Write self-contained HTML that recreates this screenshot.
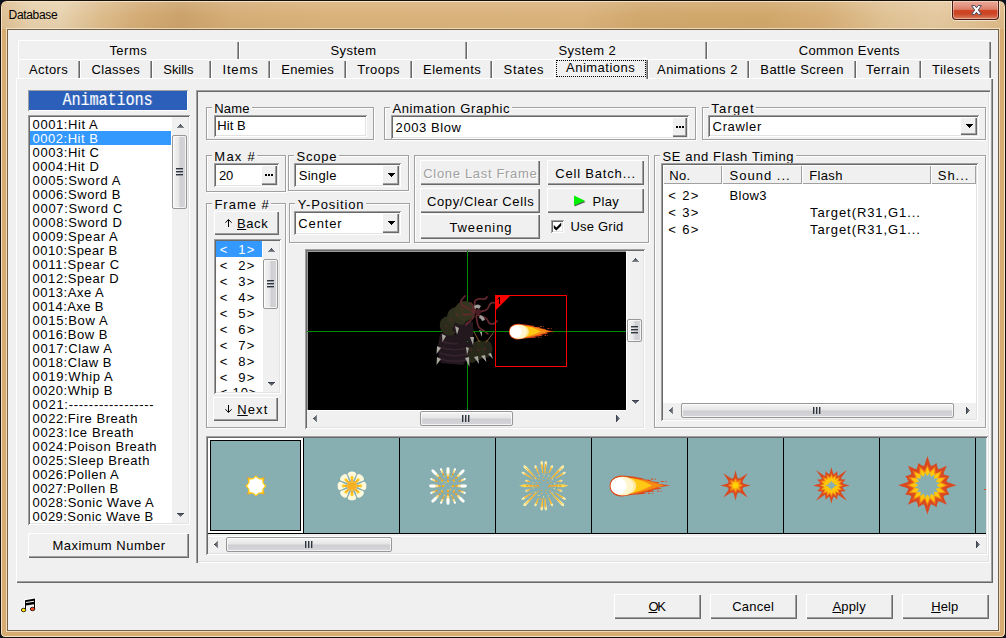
<!DOCTYPE html>
<html>
<head>
<meta charset="utf-8">
<title>Database</title>
<style>
html,body{margin:0;padding:0;}
body{width:1006px;height:638px;overflow:hidden;background:#D8B07A;font-family:"Liberation Sans",sans-serif;}
#w{position:relative;width:1006px;height:638px;overflow:hidden;}
#w div{position:absolute;box-sizing:border-box;}
.t{white-space:pre;line-height:normal;font-family:"Liberation Sans",sans-serif;}
.face{background:#F0F0F0;}
/* raised classic button */
.btn{background:#F0F0F0;box-shadow:inset 1px 1px 0 #FFFFFF,inset -1px -1px 0 #696969,inset -2px -2px 0 #A0A0A0;}
/* sunken client edge */
.sunk{background:#FFF;box-shadow:inset 1px 1px 0 #A0A0A0,inset -1px -1px 0 #FFFFFF,inset 2px 2px 0 #696969,inset -2px -2px 0 #E3E3E3;}
/* etched group box */
.grp{border:1px solid #A0A0A0;box-shadow:1px 1px 0 #FFFFFF,inset 1px 1px 0 #FFFFFF;}
.lbl{background:#F0F0F0;}
.sel{background:#3399FF;}
.sbtrack{background:#F0F0F0;}
.thumbv{border:1px solid #979797;border-radius:2px;background:linear-gradient(to right,#F4F4F4 0%,#E6E6E8 45%,#CFCFD3 55%,#D6D6DA 100%);box-shadow:inset 0 0 0 1px rgba(255,255,255,.7);}
.thumbh{border:1px solid #979797;border-radius:2px;background:linear-gradient(to bottom,#F4F4F4 0%,#E6E6E8 45%,#CFCFD3 55%,#D6D6DA 100%);box-shadow:inset 0 0 0 1px rgba(255,255,255,.7);}
.hdr{background:#F0F0F0;box-shadow:inset 1px 1px 0 #FFFFFF,inset -1px -1px 0 #A0A0A0;}
svg{position:absolute;overflow:visible;}
</style>
</head>
<body>
<div id="w">
<div style="left:0;top:0;width:1006px;height:638px;background:#0B1222;"></div>
<div style="left:0;top:0;width:1006px;height:638px;border:1px solid #15100A;border-radius:7px 7px 5px 5px;background:#D6AC72;box-shadow:inset 0 0 0 1px rgba(255,244,225,.75);"></div>
<div style="left:2px;top:2px;width:1002px;height:27px;border-radius:5px 5px 0 0;background:linear-gradient(97deg,#DDBE92 0%,#E6D0AC 3%,#E7D2AF 6%,#DDBC8C 10%,#D3AB75 14%,#CBA26B 18%,#D5AD77 23%,#D9B27B 32%,#D9B27C 58%,#D1A86D 64%,#D0A76B 76%,#D6AE76 82%,#E0C294 88%,#E4C9A0 93%,#E0C193 97%,#DCB987 100%);"></div>
<div style="left:2px;top:2px;width:1002px;height:27px;background:linear-gradient(to bottom,rgba(255,255,255,.12),rgba(255,255,255,0) 50%,rgba(120,80,30,.04));"></div>
<div style="left:7px;top:29px;width:992px;height:602px;border:1px solid #756146;background:#F0F0F0;box-shadow:0 0 0 1px rgba(255,242,222,.65);"></div>
<div class="t " style="left:8.60px;top:8.34px;font-size:12px;letter-spacing:-0.338px;color:#000;">Database</div>
<div style="left:950px;top:1px;width:51px;height:21px;overflow:hidden;"><div style="left:2px;top:0;width:47px;height:19px;border:1px solid #4A1B14;border-top:none;border-radius:0 0 4px 4px;box-shadow:0 0 0 1px rgba(255,255,255,.55),inset 0 0 0 1px rgba(255,255,255,.35);background:linear-gradient(to bottom,#ECA896 0%,#E49683 25%,#DB7C67 47%,#CF4524 50%,#CC4424 70%,#D46A47 90%,#DC8A6A 100%);"></div></div>
<svg style="left:971px;top:5px" width="11" height="10" viewBox="0 0 11 10"><path d="M0.6 0.6 L3.9 0.6 L5.5 2.8 L7.1 0.6 L10.4 0.6 L7.3 5 L10.4 9.4 L7.1 9.4 L5.5 7.2 L3.9 9.4 L0.6 9.4 L3.7 5 Z" fill="#FFFFFF" stroke="#4B4D60" stroke-width="1" stroke-linejoin="round"/></svg>
<div style="left:18px;top:40px;width:221px;height:19px;border-top:1px solid #FFF;border-left:1px solid #FFF;border-radius:2px 2px 0 0;background:#F0F0F0;"></div>
<div style="left:237px;top:42px;width:1px;height:17px;background:#A0A0A0;"></div>
<div style="left:238px;top:42px;width:1px;height:17px;background:#696969;"></div>
<div class="t " style="left:109.40px;top:43.03px;font-size:13px;letter-spacing:0.478px;color:#000;">Terms</div>
<div style="left:239px;top:40px;width:228px;height:19px;border-top:1px solid #FFF;border-left:1px solid #FFF;border-radius:2px 2px 0 0;background:#F0F0F0;"></div>
<div style="left:465px;top:42px;width:1px;height:17px;background:#A0A0A0;"></div>
<div style="left:466px;top:42px;width:1px;height:17px;background:#696969;"></div>
<div class="t " style="left:330.50px;top:43.03px;font-size:13px;letter-spacing:0.432px;color:#000;">System</div>
<div style="left:467px;top:40px;width:240px;height:19px;border-top:1px solid #FFF;border-left:1px solid #FFF;border-radius:2px 2px 0 0;background:#F0F0F0;"></div>
<div style="left:705px;top:42px;width:1px;height:17px;background:#A0A0A0;"></div>
<div style="left:706px;top:42px;width:1px;height:17px;background:#696969;"></div>
<div class="t " style="left:558.40px;top:43.03px;font-size:13px;letter-spacing:0.445px;color:#000;">System 2</div>
<div style="left:707px;top:40px;width:284px;height:19px;border-top:1px solid #FFF;border-left:1px solid #FFF;border-radius:2px 2px 0 0;background:#F0F0F0;"></div>
<div style="left:989px;top:42px;width:1px;height:17px;background:#A0A0A0;"></div>
<div style="left:990px;top:42px;width:1px;height:17px;background:#696969;"></div>
<div class="t " style="left:798.70px;top:43.03px;font-size:13px;letter-spacing:0.401px;color:#000;">Common Events</div>
<div style="left:18px;top:59px;width:62px;height:19px;border-top:1px solid #FFF;border-left:1px solid #FFF;border-radius:2px 2px 0 0;background:#F0F0F0;"></div>
<div style="left:78px;top:61px;width:1px;height:17px;background:#A0A0A0;"></div>
<div style="left:79px;top:61px;width:1px;height:17px;background:#696969;"></div>
<div class="t " style="left:29.10px;top:62.03px;font-size:13px;letter-spacing:0.352px;color:#000;">Actors</div>
<div style="left:80px;top:59px;width:72px;height:19px;border-top:1px solid #FFF;border-left:1px solid #FFF;border-radius:2px 2px 0 0;background:#F0F0F0;"></div>
<div style="left:150px;top:61px;width:1px;height:17px;background:#A0A0A0;"></div>
<div style="left:151px;top:61px;width:1px;height:17px;background:#696969;"></div>
<div class="t " style="left:91.50px;top:62.03px;font-size:13px;letter-spacing:0.327px;color:#000;">Classes</div>
<div style="left:152px;top:59px;width:59px;height:19px;border-top:1px solid #FFF;border-left:1px solid #FFF;border-radius:2px 2px 0 0;background:#F0F0F0;"></div>
<div style="left:209px;top:61px;width:1px;height:17px;background:#A0A0A0;"></div>
<div style="left:210px;top:61px;width:1px;height:17px;background:#696969;"></div>
<div class="t " style="left:163.30px;top:62.03px;font-size:13px;letter-spacing:-0.047px;color:#000;">Skills</div>
<div style="left:211px;top:59px;width:59px;height:19px;border-top:1px solid #FFF;border-left:1px solid #FFF;border-radius:2px 2px 0 0;background:#F0F0F0;"></div>
<div style="left:268px;top:61px;width:1px;height:17px;background:#A0A0A0;"></div>
<div style="left:269px;top:61px;width:1px;height:17px;background:#696969;"></div>
<div class="t " style="left:222.40px;top:62.03px;font-size:13px;letter-spacing:0.879px;color:#000;">Items</div>
<div style="left:270px;top:59px;width:76px;height:19px;border-top:1px solid #FFF;border-left:1px solid #FFF;border-radius:2px 2px 0 0;background:#F0F0F0;"></div>
<div style="left:344px;top:61px;width:1px;height:17px;background:#A0A0A0;"></div>
<div style="left:345px;top:61px;width:1px;height:17px;background:#696969;"></div>
<div class="t " style="left:281.30px;top:62.03px;font-size:13px;letter-spacing:0.304px;color:#000;">Enemies</div>
<div style="left:346px;top:59px;width:66px;height:19px;border-top:1px solid #FFF;border-left:1px solid #FFF;border-radius:2px 2px 0 0;background:#F0F0F0;"></div>
<div style="left:410px;top:61px;width:1px;height:17px;background:#A0A0A0;"></div>
<div style="left:411px;top:61px;width:1px;height:17px;background:#696969;"></div>
<div class="t " style="left:357.30px;top:62.03px;font-size:13px;letter-spacing:0.464px;color:#000;">Troops</div>
<div style="left:412px;top:59px;width:80px;height:19px;border-top:1px solid #FFF;border-left:1px solid #FFF;border-radius:2px 2px 0 0;background:#F0F0F0;"></div>
<div style="left:490px;top:61px;width:1px;height:17px;background:#A0A0A0;"></div>
<div style="left:491px;top:61px;width:1px;height:17px;background:#696969;"></div>
<div class="t " style="left:423.00px;top:62.03px;font-size:13px;letter-spacing:0.516px;color:#000;">Elements</div>
<div style="left:492px;top:59px;width:62px;height:19px;border-top:1px solid #FFF;border-left:1px solid #FFF;border-radius:2px 2px 0 0;background:#F0F0F0;"></div>
<div class="t " style="left:503.60px;top:62.03px;font-size:13px;letter-spacing:0.629px;color:#000;">States</div>
<div style="left:648px;top:59px;width:101px;height:19px;border-top:1px solid #FFF;border-left:1px solid #FFF;border-radius:2px 2px 0 0;background:#F0F0F0;"></div>
<div style="left:747px;top:61px;width:1px;height:17px;background:#A0A0A0;"></div>
<div style="left:748px;top:61px;width:1px;height:17px;background:#696969;"></div>
<div class="t " style="left:657.00px;top:62.03px;font-size:13px;letter-spacing:0.477px;color:#000;">Animations 2</div>
<div style="left:749px;top:59px;width:107px;height:19px;border-top:1px solid #FFF;border-left:1px solid #FFF;border-radius:2px 2px 0 0;background:#F0F0F0;"></div>
<div style="left:854px;top:61px;width:1px;height:17px;background:#A0A0A0;"></div>
<div style="left:855px;top:61px;width:1px;height:17px;background:#696969;"></div>
<div class="t " style="left:760.30px;top:62.03px;font-size:13px;letter-spacing:0.430px;color:#000;">Battle Screen</div>
<div style="left:856px;top:59px;width:65px;height:19px;border-top:1px solid #FFF;border-left:1px solid #FFF;border-radius:2px 2px 0 0;background:#F0F0F0;"></div>
<div style="left:919px;top:61px;width:1px;height:17px;background:#A0A0A0;"></div>
<div style="left:920px;top:61px;width:1px;height:17px;background:#696969;"></div>
<div class="t " style="left:866.00px;top:62.03px;font-size:13px;letter-spacing:0.644px;color:#000;">Terrain</div>
<div style="left:921px;top:59px;width:70px;height:19px;border-top:1px solid #FFF;border-left:1px solid #FFF;border-radius:2px 2px 0 0;background:#F0F0F0;"></div>
<div style="left:989px;top:61px;width:1px;height:17px;background:#A0A0A0;"></div>
<div style="left:990px;top:61px;width:1px;height:17px;background:#696969;"></div>
<div class="t " style="left:932.00px;top:62.03px;font-size:13px;letter-spacing:0.485px;color:#000;">Tilesets</div>
<div style="left:16px;top:78px;width:977px;height:505px;background:#F0F0F0;box-shadow:inset 1px 1px 0 #FFF,inset -1px -1px 0 #696969,inset -2px -2px 0 #A0A0A0;"></div>
<div style="left:554px;top:58px;width:94px;height:21px;border-top:1px solid #FFF;border-left:1px solid #FFF;border-radius:2px 2px 0 0;background:#F0F0F0;"></div>
<div style="left:646px;top:60px;width:1px;height:19px;background:#A0A0A0;"></div>
<div style="left:647px;top:60px;width:1px;height:19px;background:#696969;"></div>
<div style="left:556px;top:60px;width:90px;height:17px;border:1px dotted #000;"></div>
<div class="t " style="left:566.00px;top:59.73px;font-size:13px;letter-spacing:0.499px;color:#000;">Animations</div>
<div style="left:28px;top:90px;width:160px;height:21px;background:#2B5FBA;box-shadow:inset 1px 1px 0 #A0A0A0,inset -1px -1px 0 #FFF;"></div>
<div class="t" style="left:62.5px;top:89.8px;font-family:'Liberation Mono',monospace;font-size:15px;letter-spacing:0px;color:#FFF;transform:scaleY(1.265);transform-origin:0 0;text-shadow:1px 0 0 rgba(255,255,255,.25);">Animations</div>
<div class="sunk" style="left:28px;top:115px;width:162px;height:410px;"></div>
<div class="sel" style="left:30px;top:131px;width:141px;height:14px;"></div>
<div class="t " style="left:32.60px;top:117.04px;font-size:13px;letter-spacing:0.579px;color:#000;">0001:Hit A</div>
<div class="t " style="left:32.60px;top:131.04px;font-size:13px;letter-spacing:0.500px;color:#FFF;">0002:Hit B</div>
<div class="t " style="left:32.60px;top:145.04px;font-size:13px;letter-spacing:0.553px;color:#000;">0003:Hit C</div>
<div class="t " style="left:32.60px;top:159.04px;font-size:13px;letter-spacing:0.531px;color:#000;">0004:Hit D</div>
<div class="t " style="left:32.60px;top:173.04px;font-size:13px;letter-spacing:0.632px;color:#000;">0005:Sword A</div>
<div class="t " style="left:32.60px;top:187.04px;font-size:13px;letter-spacing:0.567px;color:#000;">0006:Sword B</div>
<div class="t " style="left:32.60px;top:201.04px;font-size:13px;letter-spacing:0.665px;color:#000;">0007:Sword C</div>
<div class="t " style="left:32.60px;top:215.04px;font-size:13px;letter-spacing:0.620px;color:#000;">0008:Sword D</div>
<div class="t " style="left:32.60px;top:229.04px;font-size:13px;letter-spacing:0.583px;color:#000;">0009:Spear A</div>
<div class="t " style="left:32.60px;top:243.04px;font-size:13px;letter-spacing:0.472px;color:#000;">0010:Spear B</div>
<div class="t " style="left:32.60px;top:257.04px;font-size:13px;letter-spacing:0.658px;color:#000;">0011:Spear C</div>
<div class="t " style="left:32.60px;top:271.04px;font-size:13px;letter-spacing:0.534px;color:#000;">0012:Spear D</div>
<div class="t " style="left:32.60px;top:285.04px;font-size:13px;letter-spacing:0.522px;color:#000;">0013:Axe A</div>
<div class="t " style="left:32.60px;top:299.04px;font-size:13px;letter-spacing:0.409px;color:#000;">0014:Axe B</div>
<div class="t " style="left:32.60px;top:313.04px;font-size:13px;letter-spacing:0.635px;color:#000;">0015:Bow A</div>
<div class="t " style="left:32.60px;top:327.04px;font-size:13px;letter-spacing:0.522px;color:#000;">0016:Bow B</div>
<div class="t " style="left:32.60px;top:341.04px;font-size:13px;letter-spacing:0.631px;color:#000;">0017:Claw A</div>
<div class="t " style="left:32.60px;top:355.04px;font-size:13px;letter-spacing:0.519px;color:#000;">0018:Claw B</div>
<div class="t " style="left:32.60px;top:369.04px;font-size:13px;letter-spacing:0.648px;color:#000;">0019:Whip A</div>
<div class="t " style="left:32.60px;top:383.04px;font-size:13px;letter-spacing:0.527px;color:#000;">0020:Whip B</div>
<div class="t " style="left:32.60px;top:397.04px;font-size:13px;letter-spacing:0.713px;color:#000;">0021:-----------------</div>
<div class="t " style="left:32.60px;top:411.04px;font-size:13px;letter-spacing:0.538px;color:#000;">0022:Fire Breath</div>
<div class="t " style="left:32.60px;top:425.04px;font-size:13px;letter-spacing:0.651px;color:#000;">0023:Ice Breath</div>
<div class="t " style="left:32.60px;top:439.04px;font-size:13px;letter-spacing:0.577px;color:#000;">0024:Poison Breath</div>
<div class="t " style="left:32.60px;top:453.04px;font-size:13px;letter-spacing:0.569px;color:#000;">0025:Sleep Breath</div>
<div class="t " style="left:32.60px;top:467.04px;font-size:13px;letter-spacing:0.489px;color:#000;">0026:Pollen A</div>
<div class="t " style="left:32.60px;top:481.04px;font-size:13px;letter-spacing:0.387px;color:#000;">0027:Pollen B</div>
<div class="t " style="left:32.60px;top:495.04px;font-size:13px;letter-spacing:0.508px;color:#000;">0028:Sonic Wave A</div>
<div class="t " style="left:32.60px;top:509.03px;font-size:13px;letter-spacing:0.438px;color:#000;">0029:Sonic Wave B</div>
<div style="left:171px;top:117px;width:1px;height:406px;background:#FFF;"></div>
<div class="sbtrack" style="left:172px;top:117px;width:16px;height:406px;"></div>
<div style="left:180px;top:124px;width:1px;height:1px;background:#3F4550;opacity:1.00;"></div>
<div style="left:179px;top:125px;width:3px;height:1px;background:#3F4550;opacity:0.88;"></div>
<div style="left:178px;top:126px;width:5px;height:1px;background:#3F4550;opacity:0.76;"></div>
<div style="left:177px;top:127px;width:7px;height:1px;background:#3F4550;opacity:0.64;"></div>
<div style="left:177px;top:513px;width:7px;height:1px;background:#3F4550;opacity:1.00;"></div>
<div style="left:178px;top:514px;width:5px;height:1px;background:#3F4550;opacity:0.88;"></div>
<div style="left:179px;top:515px;width:3px;height:1px;background:#3F4550;opacity:0.76;"></div>
<div style="left:180px;top:516px;width:1px;height:1px;background:#3F4550;opacity:0.64;"></div>
<div class="thumbv" style="left:172px;top:135px;width:15px;height:74px;"></div>
<div style="left:176px;top:168px;width:7px;height:1px;background:#30353C;"></div>
<div style="left:176px;top:169px;width:7px;height:1px;background:#969BA3;"></div>
<div style="left:176px;top:171px;width:7px;height:1px;background:#30353C;"></div>
<div style="left:176px;top:172px;width:7px;height:1px;background:#969BA3;"></div>
<div style="left:176px;top:174px;width:7px;height:1px;background:#30353C;"></div>
<div style="left:176px;top:175px;width:7px;height:1px;background:#969BA3;"></div>
<div class="btn" style="left:28px;top:533px;width:161px;height:25px;"></div>
<div class="t " style="left:52.40px;top:537.53px;font-size:13px;letter-spacing:0.494px;color:#000;">Maximum Number</div>
<div style="left:196px;top:90px;width:794px;height:473px;background:#F0F0F0;box-shadow:inset 1px 1px 0 #A0A0A0,inset 2px 2px 0 #696969,inset -1px -1px 0 #FFF,inset -2px -2px 0 #E3E3E3;"></div>
<div class="grp" style="left:206px;top:107px;width:168px;height:33px;"></div>
<div class="lbl" style="left:212px;top:105px;width:40px;height:5px;"></div>
<div class="t " style="left:214.30px;top:100.83px;font-size:13px;letter-spacing:0.141px;color:#000;">Name</div>
<div class="sunk" style="left:214px;top:115px;width:153px;height:22px;"></div>
<div class="t " style="left:217.20px;top:117.83px;font-size:13px;letter-spacing:0.082px;color:#000;">Hit B</div>
<div class="grp" style="left:384px;top:107px;width:312px;height:33px;"></div>
<div class="lbl" style="left:390px;top:105px;width:122px;height:5px;"></div>
<div class="t " style="left:392.40px;top:100.83px;font-size:13px;letter-spacing:0.641px;color:#000;">Animation Graphic</div>
<div class="sunk" style="left:391px;top:115px;width:298px;height:24px;"></div>
<div class="t " style="left:395.60px;top:119.73px;font-size:13px;letter-spacing:0.586px;color:#000;">2003 Blow</div>
<div class="btn" style="left:672px;top:117px;width:15px;height:20px;"></div>
<div style="left:676px;top:126px;width:2px;height:2px;background:#000;"></div>
<div style="left:679px;top:126px;width:2px;height:2px;background:#000;"></div>
<div style="left:682px;top:126px;width:2px;height:2px;background:#000;"></div>
<div class="grp" style="left:702px;top:107px;width:284px;height:33px;"></div>
<div class="lbl" style="left:709px;top:105px;width:47px;height:5px;"></div>
<div class="t " style="left:711.20px;top:100.83px;font-size:13px;letter-spacing:1.254px;color:#000;">Target</div>
<div class="sunk" style="left:708px;top:115px;width:271px;height:22px;"></div>
<div class="t " style="left:712.60px;top:119.23px;font-size:13px;letter-spacing:0.653px;color:#000;">Crawler</div>
<div class="btn" style="left:960px;top:117px;width:17px;height:18px;"></div>
<div style="left:966px;top:124px;width:7px;height:1px;background:#000;"></div>
<div style="left:967px;top:125px;width:5px;height:1px;background:#000;"></div>
<div style="left:968px;top:126px;width:3px;height:1px;background:#000;"></div>
<div style="left:969px;top:127px;width:1px;height:1px;background:#000;"></div>
<div class="grp" style="left:206px;top:155px;width:80px;height:37px;"></div>
<div class="lbl" style="left:212px;top:153px;width:45px;height:5px;"></div>
<div class="t " style="left:214.30px;top:148.94px;font-size:13px;letter-spacing:1.250px;color:#000;">Max #</div>
<div class="sunk" style="left:214px;top:163px;width:65px;height:24px;"></div>
<div class="t " style="left:218.90px;top:168.04px;font-size:13px;letter-spacing:-0.060px;color:#000;">20</div>
<div class="btn" style="left:261px;top:165px;width:16px;height:20px;"></div>
<div style="left:265px;top:174px;width:2px;height:2px;background:#000;"></div>
<div style="left:268px;top:174px;width:2px;height:2px;background:#000;"></div>
<div style="left:271px;top:174px;width:2px;height:2px;background:#000;"></div>
<div class="grp" style="left:288px;top:155px;width:121px;height:36px;"></div>
<div class="lbl" style="left:294px;top:153px;width:45px;height:5px;"></div>
<div class="t " style="left:296.60px;top:148.94px;font-size:13px;letter-spacing:0.735px;color:#000;">Scope</div>
<div class="sunk" style="left:294px;top:163px;width:107px;height:24px;"></div>
<div class="t " style="left:298.70px;top:168.04px;font-size:13px;letter-spacing:0.313px;color:#000;">Single</div>
<div class="btn" style="left:382px;top:165px;width:17px;height:20px;"></div>
<div style="left:388px;top:173px;width:7px;height:1px;background:#000;"></div>
<div style="left:389px;top:174px;width:5px;height:1px;background:#000;"></div>
<div style="left:390px;top:175px;width:3px;height:1px;background:#000;"></div>
<div style="left:391px;top:176px;width:1px;height:1px;background:#000;"></div>
<div class="grp" style="left:206px;top:203px;width:80px;height:225px;"></div>
<div class="lbl" style="left:212px;top:201px;width:59px;height:5px;"></div>
<div class="t " style="left:214.40px;top:196.54px;font-size:13px;letter-spacing:1.000px;color:#000;">Frame #</div>
<div class="btn" style="left:214px;top:211px;width:65px;height:24px;"></div>
<div class="grp" style="left:289px;top:203px;width:121px;height:40px;"></div>
<div class="lbl" style="left:295px;top:201px;width:71px;height:5px;"></div>
<div class="t " style="left:297.70px;top:196.63px;font-size:13px;letter-spacing:0.860px;color:#000;">Y-Position</div>
<div class="sunk" style="left:294px;top:211px;width:107px;height:24px;"></div>
<div class="t " style="left:298.30px;top:215.94px;font-size:13px;letter-spacing:0.876px;color:#000;">Center</div>
<div class="btn" style="left:382px;top:213px;width:17px;height:20px;"></div>
<div style="left:388px;top:221px;width:7px;height:1px;background:#000;"></div>
<div style="left:389px;top:222px;width:5px;height:1px;background:#000;"></div>
<div style="left:390px;top:223px;width:3px;height:1px;background:#000;"></div>
<div style="left:391px;top:224px;width:1px;height:1px;background:#000;"></div>
<svg style="left:225px;top:219px" width="7" height="8" viewBox="0 0 7 8"><path d="M3.5 0.6 V8 M0.4 3.7 L3.5 0.6 L6.6 3.7" fill="none" stroke="#000" stroke-width="1"/></svg>
<div class="t " style="left:237.00px;top:216.44px;font-size:13px;letter-spacing:0.600px;color:#000;"><u>B</u>ack</div>
<div class="sunk" style="left:214px;top:239px;width:67px;height:155px;"></div>
<div class="sel" style="left:216px;top:241px;width:46px;height:16px;"></div>
<div class="t " style="left:219.80px;top:241.74px;font-size:13px;letter-spacing:1.241px;color:#FFF;">&lt;  1&gt;</div>
<div class="t " style="left:219.80px;top:257.74px;font-size:13px;letter-spacing:1.241px;color:#000;">&lt;  2&gt;</div>
<div class="t " style="left:219.80px;top:273.74px;font-size:13px;letter-spacing:1.241px;color:#000;">&lt;  3&gt;</div>
<div class="t " style="left:219.80px;top:289.74px;font-size:13px;letter-spacing:1.241px;color:#000;">&lt;  4&gt;</div>
<div class="t " style="left:219.80px;top:305.74px;font-size:13px;letter-spacing:1.241px;color:#000;">&lt;  5&gt;</div>
<div class="t " style="left:219.80px;top:321.74px;font-size:13px;letter-spacing:1.241px;color:#000;">&lt;  6&gt;</div>
<div class="t " style="left:219.80px;top:337.74px;font-size:13px;letter-spacing:1.241px;color:#000;">&lt;  7&gt;</div>
<div class="t " style="left:219.80px;top:353.74px;font-size:13px;letter-spacing:1.241px;color:#000;">&lt;  8&gt;</div>
<div class="t " style="left:219.80px;top:369.74px;font-size:13px;letter-spacing:1.241px;color:#000;">&lt;  9&gt;</div>
<div style="left:216px;top:385px;width:46px;height:7px;overflow:hidden;"><div class="t" style="position:absolute;left:3.8px;top:0.2px;font-size:13px;letter-spacing:.8px;">&lt; 10&gt;</div></div>
<div style="left:262px;top:241px;width:1px;height:151px;background:#FFF;"></div>
<div class="sbtrack" style="left:263px;top:241px;width:16px;height:151px;"></div>
<div style="left:271px;top:248px;width:1px;height:1px;background:#3F4550;opacity:1.00;"></div>
<div style="left:270px;top:249px;width:3px;height:1px;background:#3F4550;opacity:0.88;"></div>
<div style="left:269px;top:250px;width:5px;height:1px;background:#3F4550;opacity:0.76;"></div>
<div style="left:268px;top:251px;width:7px;height:1px;background:#3F4550;opacity:0.64;"></div>
<div style="left:268px;top:382px;width:7px;height:1px;background:#3F4550;opacity:1.00;"></div>
<div style="left:269px;top:383px;width:5px;height:1px;background:#3F4550;opacity:0.88;"></div>
<div style="left:270px;top:384px;width:3px;height:1px;background:#3F4550;opacity:0.76;"></div>
<div style="left:271px;top:385px;width:1px;height:1px;background:#3F4550;opacity:0.64;"></div>
<div class="thumbv" style="left:263px;top:259px;width:15px;height:50px;"></div>
<div style="left:267px;top:280px;width:7px;height:1px;background:#30353C;"></div>
<div style="left:267px;top:281px;width:7px;height:1px;background:#969BA3;"></div>
<div style="left:267px;top:283px;width:7px;height:1px;background:#30353C;"></div>
<div style="left:267px;top:284px;width:7px;height:1px;background:#969BA3;"></div>
<div style="left:267px;top:286px;width:7px;height:1px;background:#30353C;"></div>
<div style="left:267px;top:287px;width:7px;height:1px;background:#969BA3;"></div>
<div class="btn" style="left:213px;top:397px;width:65px;height:24px;"></div>
<svg style="left:225px;top:405px" width="7" height="8" viewBox="0 0 7 8"><path d="M3.5 0 V7.4 M0.4 4.3 L3.5 7.4 L6.6 4.3" fill="none" stroke="#000" stroke-width="1"/></svg>
<div class="t " style="left:237.30px;top:402.04px;font-size:13px;letter-spacing:1.090px;color:#000;"><u>N</u>ext</div>
<div class="grp" style="left:414px;top:155px;width:235px;height:88px;"></div>
<div class="btn" style="left:420px;top:160px;width:120px;height:25px;"></div>
<div class="t " style="left:423.30px;top:166.04px;font-size:13px;letter-spacing:0.672px;color:#A0A0A0;text-shadow:1px 1px 0 #FFF;">Clone Last Frame</div>
<div class="btn" style="left:547px;top:160px;width:97px;height:25px;"></div>
<div class="t " style="left:555.30px;top:165.94px;font-size:13px;letter-spacing:0.810px;color:#000;">Cell Batch...</div>
<div class="btn" style="left:420px;top:188px;width:120px;height:25px;"></div>
<div class="t " style="left:427.00px;top:193.63px;font-size:13px;letter-spacing:0.611px;color:#000;">Copy/Clear Cells</div>
<div class="btn" style="left:547px;top:188px;width:97px;height:25px;"></div>
<div class="t " style="left:592.50px;top:193.83px;font-size:13px;letter-spacing:0.304px;color:#000;">Play</div>
<svg style="left:573px;top:195px" width="14" height="12" viewBox="0 0 14 12"><path d="M1.6 1.8 L12.6 7 L1.6 11.6 Z" fill="#5A5A5A"/><path d="M1 0.6 L12 5.8 L1 10.6 Z" fill="#00F000"/></svg>
<div class="btn" style="left:420px;top:214px;width:120px;height:25px;"></div>
<div class="t " style="left:449.40px;top:219.94px;font-size:13px;letter-spacing:0.936px;color:#000;">Tweening</div>
<div class="sunk" style="left:551px;top:220px;width:13px;height:13px;"></div>
<svg style="left:553px;top:222px" width="9" height="9" viewBox="0 0 9 9"><path d="M0.8 3 L3.4 5.4 L8.2 0.6 L8.2 3.8 L3.4 8.6 L0.8 6.2 Z" fill="#000"/></svg>
<div class="t " style="left:570.50px;top:219.44px;font-size:13px;letter-spacing:0.202px;color:#000;">Use Grid</div>
<div class="grp" style="left:654px;top:155px;width:332px;height:273px;"></div>
<div class="lbl" style="left:660px;top:153px;width:136px;height:5px;"></div>
<div class="t " style="left:662.60px;top:148.94px;font-size:13px;letter-spacing:0.609px;color:#000;">SE and Flash Timing</div>
<div class="sunk" style="left:661px;top:163px;width:317px;height:258px;"></div>
<div class="hdr" style="left:663px;top:165px;width:59px;height:19px;"></div>
<div class="hdr" style="left:722px;top:165px;width:80px;height:19px;"></div>
<div class="hdr" style="left:802px;top:165px;width:129px;height:19px;"></div>
<div class="hdr" style="left:931px;top:165px;width:45px;height:19px;"></div>
<div class="t " style="left:669.30px;top:167.74px;font-size:13px;letter-spacing:0.235px;color:#000;">No.</div>
<div class="t " style="left:729.50px;top:167.74px;font-size:13px;letter-spacing:1.020px;color:#000;">Sound ...</div>
<div class="t " style="left:809.30px;top:167.74px;font-size:13px;letter-spacing:0.328px;color:#000;">Flash</div>
<div class="t " style="left:937.80px;top:167.74px;font-size:13px;letter-spacing:0.941px;color:#000;">Sh...</div>
<div class="t " style="left:668.30px;top:188.13px;font-size:13px;letter-spacing:1.358px;color:#000;">&lt; 2&gt;</div>
<div class="t " style="left:729.50px;top:188.13px;font-size:13px;letter-spacing:0.423px;color:#000;">Blow3</div>
<div class="t " style="left:668.30px;top:205.24px;font-size:13px;letter-spacing:1.358px;color:#000;">&lt; 3&gt;</div>
<div class="t " style="left:810.00px;top:205.24px;font-size:13px;letter-spacing:0.920px;color:#000;">Target(R31,G1...</div>
<div class="t " style="left:668.30px;top:221.94px;font-size:13px;letter-spacing:1.358px;color:#000;">&lt; 6&gt;</div>
<div class="t " style="left:810.00px;top:221.94px;font-size:13px;letter-spacing:0.920px;color:#000;">Target(R31,G1...</div>
<div style="left:663px;top:402px;width:313px;height:1px;background:#FFF;"></div>
<div class="sbtrack" style="left:663px;top:403px;width:313px;height:16px;"></div>
<div style="left:669px;top:410px;width:1px;height:1px;background:#3F4550;opacity:1.00;"></div>
<div style="left:670px;top:409px;width:1px;height:3px;background:#3F4550;opacity:0.88;"></div>
<div style="left:671px;top:408px;width:1px;height:5px;background:#3F4550;opacity:0.76;"></div>
<div style="left:672px;top:407px;width:1px;height:7px;background:#3F4550;opacity:0.64;"></div>
<div style="left:966px;top:407px;width:1px;height:7px;background:#3F4550;opacity:1.00;"></div>
<div style="left:967px;top:408px;width:1px;height:5px;background:#3F4550;opacity:0.88;"></div>
<div style="left:968px;top:409px;width:1px;height:3px;background:#3F4550;opacity:0.76;"></div>
<div style="left:969px;top:410px;width:1px;height:1px;background:#3F4550;opacity:0.64;"></div>
<div class="thumbh" style="left:681px;top:403px;width:273px;height:15px;"></div>
<div style="left:813px;top:407px;width:1px;height:7px;background:#30353C;"></div>
<div style="left:814px;top:407px;width:1px;height:7px;background:#969BA3;"></div>
<div style="left:816px;top:407px;width:1px;height:7px;background:#30353C;"></div>
<div style="left:817px;top:407px;width:1px;height:7px;background:#969BA3;"></div>
<div style="left:819px;top:407px;width:1px;height:7px;background:#30353C;"></div>
<div style="left:820px;top:407px;width:1px;height:7px;background:#969BA3;"></div>
<div class="sunk" style="left:305px;top:249px;width:340px;height:180px;background:#F0F0F0;"></div>
<div class="" style="left:307px;top:251px;width:319px;height:159px;background:#000;overflow:hidden;"><!--VIEW--></div>
<div style="left:307px;top:251px;width:319px;height:1px;background:#9A9A9A;"></div>
<div style="left:307px;top:251px;width:1px;height:159px;background:#9A9A9A;"></div>
<div style="left:626px;top:251px;width:1px;height:159px;background:#FFF;"></div>
<div class="sbtrack" style="left:627px;top:251px;width:16px;height:159px;"></div>
<div style="left:635px;top:258px;width:1px;height:1px;background:#3F4550;opacity:1.00;"></div>
<div style="left:634px;top:259px;width:3px;height:1px;background:#3F4550;opacity:0.88;"></div>
<div style="left:633px;top:260px;width:5px;height:1px;background:#3F4550;opacity:0.76;"></div>
<div style="left:632px;top:261px;width:7px;height:1px;background:#3F4550;opacity:0.64;"></div>
<div style="left:632px;top:400px;width:7px;height:1px;background:#3F4550;opacity:1.00;"></div>
<div style="left:633px;top:401px;width:5px;height:1px;background:#3F4550;opacity:0.88;"></div>
<div style="left:634px;top:402px;width:3px;height:1px;background:#3F4550;opacity:0.76;"></div>
<div style="left:635px;top:403px;width:1px;height:1px;background:#3F4550;opacity:0.64;"></div>
<div class="thumbv" style="left:627px;top:319px;width:15px;height:23px;"></div>
<div style="left:631px;top:326px;width:7px;height:1px;background:#30353C;"></div>
<div style="left:631px;top:327px;width:7px;height:1px;background:#969BA3;"></div>
<div style="left:631px;top:329px;width:7px;height:1px;background:#30353C;"></div>
<div style="left:631px;top:330px;width:7px;height:1px;background:#969BA3;"></div>
<div style="left:631px;top:332px;width:7px;height:1px;background:#30353C;"></div>
<div style="left:631px;top:333px;width:7px;height:1px;background:#969BA3;"></div>
<div style="left:307px;top:410px;width:319px;height:1px;background:#FFF;"></div>
<div class="sbtrack" style="left:307px;top:411px;width:319px;height:16px;"></div>
<div style="left:313px;top:418px;width:1px;height:1px;background:#3F4550;opacity:1.00;"></div>
<div style="left:314px;top:417px;width:1px;height:3px;background:#3F4550;opacity:0.88;"></div>
<div style="left:315px;top:416px;width:1px;height:5px;background:#3F4550;opacity:0.76;"></div>
<div style="left:316px;top:415px;width:1px;height:7px;background:#3F4550;opacity:0.64;"></div>
<div style="left:616px;top:415px;width:1px;height:7px;background:#3F4550;opacity:1.00;"></div>
<div style="left:617px;top:416px;width:1px;height:5px;background:#3F4550;opacity:0.88;"></div>
<div style="left:618px;top:417px;width:1px;height:3px;background:#3F4550;opacity:0.76;"></div>
<div style="left:619px;top:418px;width:1px;height:1px;background:#3F4550;opacity:0.64;"></div>
<div class="thumbh" style="left:420px;top:411px;width:93px;height:15px;"></div>
<div style="left:462px;top:415px;width:1px;height:7px;background:#30353C;"></div>
<div style="left:463px;top:415px;width:1px;height:7px;background:#969BA3;"></div>
<div style="left:465px;top:415px;width:1px;height:7px;background:#30353C;"></div>
<div style="left:466px;top:415px;width:1px;height:7px;background:#969BA3;"></div>
<div style="left:468px;top:415px;width:1px;height:7px;background:#30353C;"></div>
<div style="left:469px;top:415px;width:1px;height:7px;background:#969BA3;"></div>
<div class="sunk" style="left:206px;top:436px;width:782px;height:119px;background:#F0F0F0;"></div>
<div class="" style="left:208px;top:438px;width:778px;height:95px;background:#87AFB2;overflow:hidden;"><!--PAL--></div>
<div style="left:208px;top:533px;width:778px;height:1px;background:#000;"></div>
<div style="left:303px;top:438px;width:1px;height:95px;background:#000;"></div>
<div style="left:399px;top:438px;width:1px;height:95px;background:#000;"></div>
<div style="left:495px;top:438px;width:1px;height:95px;background:#000;"></div>
<div style="left:591px;top:438px;width:1px;height:95px;background:#000;"></div>
<div style="left:687px;top:438px;width:1px;height:95px;background:#000;"></div>
<div style="left:783px;top:438px;width:1px;height:95px;background:#000;"></div>
<div style="left:879px;top:438px;width:1px;height:95px;background:#000;"></div>
<div style="left:975px;top:438px;width:1px;height:95px;background:#000;"></div>
<div style="left:208px;top:438px;width:95px;height:95px;border:2px solid #FFF;box-shadow:inset 0 0 0 1px #000;"></div>
<div style="left:208px;top:536px;width:778px;height:1px;background:#FFF;"></div>
<div class="sbtrack" style="left:208px;top:537px;width:778px;height:16px;"></div>
<div style="left:214px;top:544px;width:1px;height:1px;background:#3F4550;opacity:1.00;"></div>
<div style="left:215px;top:543px;width:1px;height:3px;background:#3F4550;opacity:0.88;"></div>
<div style="left:216px;top:542px;width:1px;height:5px;background:#3F4550;opacity:0.76;"></div>
<div style="left:217px;top:541px;width:1px;height:7px;background:#3F4550;opacity:0.64;"></div>
<div style="left:976px;top:541px;width:1px;height:7px;background:#3F4550;opacity:1.00;"></div>
<div style="left:977px;top:542px;width:1px;height:5px;background:#3F4550;opacity:0.88;"></div>
<div style="left:978px;top:543px;width:1px;height:3px;background:#3F4550;opacity:0.76;"></div>
<div style="left:979px;top:544px;width:1px;height:1px;background:#3F4550;opacity:0.64;"></div>
<div class="thumbh" style="left:226px;top:537px;width:166px;height:15px;"></div>
<div style="left:305px;top:541px;width:1px;height:7px;background:#30353C;"></div>
<div style="left:306px;top:541px;width:1px;height:7px;background:#969BA3;"></div>
<div style="left:308px;top:541px;width:1px;height:7px;background:#30353C;"></div>
<div style="left:309px;top:541px;width:1px;height:7px;background:#969BA3;"></div>
<div style="left:311px;top:541px;width:1px;height:7px;background:#30353C;"></div>
<div style="left:312px;top:541px;width:1px;height:7px;background:#969BA3;"></div>
<div class="btn" style="left:614px;top:594px;width:87px;height:25px;"></div>
<div class="t " style="left:648.50px;top:599.24px;font-size:13px;letter-spacing:-1.383px;color:#000;"><u>O</u>K</div>
<div class="btn" style="left:710px;top:594px;width:87px;height:25px;"></div>
<div class="t " style="left:732.20px;top:599.24px;font-size:13px;letter-spacing:0.267px;color:#000;">Cancel</div>
<div class="btn" style="left:806px;top:594px;width:87px;height:25px;"></div>
<div class="t " style="left:832.40px;top:599.24px;font-size:13px;letter-spacing:0.195px;color:#000;"><u>A</u>pply</div>
<div class="btn" style="left:902px;top:594px;width:87px;height:25px;"></div>
<div class="t " style="left:931.20px;top:599.24px;font-size:13px;letter-spacing:0.088px;color:#000;"><u>H</u>elp</div>
<svg style="left:20px;top:597px" width="17" height="16" viewBox="0 0 17 16"><g stroke="#FFF" stroke-width="2.2" fill="#FFF" stroke-linejoin="round"><path d="M5 3.2 L15 1.6 L15 11.5 L14 11.5 L14 6 L6 7.2 L6 13 L5 13 Z"/><ellipse cx="3.6" cy="13" rx="2.3" ry="1.8"/><ellipse cx="12.6" cy="12" rx="2.3" ry="1.8"/></g><path d="M5 3.2 L15 1.6 L15 12 L14 12 L14 7.3 L6 8.6 L6 13 L5 13 Z M6 5 L14 3.7 L14 4.8 L6 6.1 Z" fill="#000" fill-rule="evenodd"/><ellipse cx="3.6" cy="13" rx="2.3" ry="1.8" fill="#FFE000" stroke="#000" stroke-width=".8"/><ellipse cx="12.6" cy="12" rx="2.3" ry="1.8" fill="#FF4A20" stroke="#000" stroke-width=".8"/></svg>
<svg style="left:0;top:0" width="1006" height="638" viewBox="0 0 1006 638"><rect x="467" y="251" width="1" height="159" fill="#008A00"/><rect x="307" y="331" width="319" height="1" fill="#008A00"/><g><ellipse cx="486" cy="349" rx="6.5" ry="9" fill="#26261A"/><ellipse cx="479" cy="350" rx="6.5" ry="10" fill="#2B2B1C"/><ellipse cx="472" cy="352" rx="6.5" ry="11" fill="#27271A"/><path d="M441 333 C437 342 437 356 441 363 L463 365 C469 358 470 346 468 336 Z" fill="#24181F"/><path d="M441 341 Q452 346 468 342 M440 347 Q452 352 468 348 M440 353 Q452 358 468 354 M441 359 Q452 363 466 360" stroke="#35232D" stroke-width="1.6" fill="none"/><path d="M458 318 L473 322 L473 347 L458 347 Z" fill="#24181F"/><ellipse cx="449" cy="326" rx="9" ry="10" fill="#2C2C1C" transform="rotate(-30 449 326)"/><ellipse cx="457" cy="317" rx="10" ry="10" fill="#30301E" transform="rotate(-30 457 317)"/><ellipse cx="465" cy="311" rx="10.5" ry="10" fill="#34341F"/><path d="M452 330 Q462 338 474 330 L470 322 Q462 328 455 322 Z" fill="#24181F"/><circle cx="462" cy="309" r="0.8" fill="#7A2030"/><circle cx="457" cy="315" r="0.8" fill="#7A2030"/><circle cx="451" cy="320" r="0.8" fill="#7A2030"/><circle cx="446" cy="326" r="0.8" fill="#7A2030"/><circle cx="478" cy="350" r="0.8" fill="#7A2030"/><circle cx="485" cy="349" r="0.8" fill="#7A2030"/><circle cx="471" cy="350" r="0.8" fill="#7A2030"/><path d="M474 332 L479.5 342 M493.5 332.5 L486 342.5" stroke="#8A5A2A" stroke-width="1" fill="none"/><g stroke="#64282F" stroke-width="1.7" fill="none" stroke-linecap="round"><path d="M474 313 C470 308 466 308 462 305 C459 302 462 299 465 296"/><path d="M475 312 C476 305 472 301 478 299 C483 298 485 301 487 297"/><path d="M477 313 C483 310 487 312 489 306 C490 303 492 302 495 303"/><path d="M477 315 C482 317 486 316 488 321 C489 325 494 325 497 321"/><path d="M476 316 C478 322 476 326 481 329 C485 331 486 332 488 334"/><path d="M474 316 C472 321 468 322 466 325"/><path d="M473 314 C468 314 466 316 463 314"/><path d="M474 312 C472 309 474 306 471 303"/></g><path d="M474 306 Q478 303 481 306 L479 309 Q477 307 475 309 Z" fill="#A0A09A"/><path d="M480 315 Q484 316 485 320 L482 321 Q481 318 479 318 Z" fill="#A0A09A"/><circle cx="478" cy="312" r="3" fill="#4A1C24"/><g fill="#A8A8A0"><path d="M455 326 L459 328 L457 335 Z"/><path d="M442 334 L446 336 L442.5 342 Z"/><path d="M437 346 L441 348 L436.5 354 Z"/><path d="M437 357 L441 359 L436.5 365 Z"/><path d="M465 358 L469 357 L469.5 367 Z"/><path d="M474 357 L478 356 L479 364 Z"/><path d="M481 356 L485 355 L486.5 362 Z"/><path d="M488 354 L491 353 L493 359 Z"/><path d="M470 337 L474 337 L473 345 Z"/><path d="M479 330 L482 331 L482 337 Z"/><path d="M466 347 L469 348 L467 355 Z"/></g></g><rect x="467" y="341" width="1" height="1" fill="#008A00"/><rect x="474" y="331" width="22" height="1" fill="#008A00" opacity=".8"/><rect x="495.5" y="295.5" width="71" height="71" fill="none" stroke="#FF0000" stroke-width="1"/><path d="M495 295 L511 295 L495 311 Z" fill="#FF0000"/><rect x="499" y="297" width="1" height="7" fill="#000"/><rect x="498" y="298" width="1" height="1" fill="#000"/><rect x="497" y="299" width="1" height="1" fill="#300" opacity=".6"/><g transform="translate(495,295) scale(0.75)"><g id="fire"><path d="M18.6 49 C18.6 42.5 24 38.2 31 38.4 L42 39.6 L53 41.4 L51 42.2 L61 43 L58.5 44 L69 45.6 L66 46.4 L79.2 48.6 L67 50.4 L71 51.8 L61 53 L64 54.4 L53 55.6 L55 56.8 L42 57.8 L31 59.4 C24 59.6 18.6 55.5 18.6 49 Z" fill="#DC4A1C"/><path d="M30 40 L44 41.4 L56 43.6 L64 45.8 L73 48.6 L64 51 L57 53.2 L44 56.4 L30 58 Z" fill="#F58A14"/><path d="M30 40.6 L42 41.6 L50 43.4 L55 45.6 L61 48.6 L55 51.2 L50 53.2 L42 55.8 L30 57.4 Z" fill="#FFC814"/><ellipse cx="32.6" cy="49" rx="12.6" ry="9.3" fill="#FFE9A0"/><ellipse cx="31" cy="49" rx="11.2" ry="9.3" fill="#FFF6CF"/><ellipse cx="27.6" cy="49" rx="8" ry="8.3" fill="#FFFFFF"/><rect x="60" y="41.6" width="2.4" height="1" fill="#DC4A1C"/><rect x="64" y="41.8" width="1.2" height="1" fill="#DC4A1C"/><rect x="70" y="44" width="2.6" height="1" fill="#DC4A1C"/><rect x="74.4" y="44" width="1.2" height="1" fill="#DC4A1C"/><rect x="66" y="53.6" width="2.2" height="1" fill="#DC4A1C"/><rect x="69.6" y="53.8" width="1" height="1" fill="#DC4A1C"/><rect x="57" y="55.8" width="2" height="1" fill="#DC4A1C"/><rect x="61" y="56" width="1" height="1" fill="#DC4A1C"/></g></g><polygon points="255.90,475.30 258.96,478.51 264.81,476.99 263.29,482.84 266.50,485.90 263.29,488.96 264.81,494.81 258.96,493.29 255.90,496.50 252.84,493.29 246.99,494.81 248.51,488.96 245.30,485.90 248.51,482.84 246.99,476.99 252.84,478.51" fill="#F2A020"/><polygon points="255.90,475.50 259.04,478.32 263.54,478.26 263.48,482.76 266.30,485.90 263.48,489.04 263.54,493.54 259.04,493.48 255.90,496.30 252.76,493.48 248.26,493.54 248.32,489.04 245.50,485.90 248.32,482.76 248.26,478.26 252.76,478.32" fill="#FFD21E"/><polygon points="255.90,477.10 258.66,479.25 261.98,479.82 262.55,483.14 264.70,485.90 262.55,488.66 261.98,491.98 258.66,492.55 255.90,494.70 253.14,492.55 249.82,491.98 249.25,488.66 247.10,485.90 249.25,483.14 249.82,479.82 253.14,479.25" fill="#FFFFFF"/><circle cx="352.0" cy="485.9" r="5.2" fill="#F6B226"/><g transform="translate(352.0,485.9) rotate(0)"><path d="M0 -3 L-4.2 -11.5 Q-4.2 -14.4 0 -14.4 Q4.2 -14.4 4.2 -11.5 Z" fill="#FFF9DC"/><path d="M0 -2.5 L-1.6 -9 L0 -10.5 L1.6 -9 Z" fill="#FFC81E"/><path d="M0 -2 L-0.8 -7 L0.8 -7 Z" fill="#F59A10"/></g><g transform="translate(352.0,485.9) rotate(45)"><path d="M0 -3 L-4.2 -11.5 Q-4.2 -14.4 0 -14.4 Q4.2 -14.4 4.2 -11.5 Z" fill="#FFF9DC"/><path d="M0 -2.5 L-1.6 -9 L0 -10.5 L1.6 -9 Z" fill="#FFC81E"/><path d="M0 -2 L-0.8 -7 L0.8 -7 Z" fill="#F59A10"/></g><g transform="translate(352.0,485.9) rotate(90)"><path d="M0 -3 L-4.2 -11.5 Q-4.2 -14.4 0 -14.4 Q4.2 -14.4 4.2 -11.5 Z" fill="#FFF9DC"/><path d="M0 -2.5 L-1.6 -9 L0 -10.5 L1.6 -9 Z" fill="#FFC81E"/><path d="M0 -2 L-0.8 -7 L0.8 -7 Z" fill="#F59A10"/></g><g transform="translate(352.0,485.9) rotate(135)"><path d="M0 -3 L-4.2 -11.5 Q-4.2 -14.4 0 -14.4 Q4.2 -14.4 4.2 -11.5 Z" fill="#FFF9DC"/><path d="M0 -2.5 L-1.6 -9 L0 -10.5 L1.6 -9 Z" fill="#FFC81E"/><path d="M0 -2 L-0.8 -7 L0.8 -7 Z" fill="#F59A10"/></g><g transform="translate(352.0,485.9) rotate(180)"><path d="M0 -3 L-4.2 -11.5 Q-4.2 -14.4 0 -14.4 Q4.2 -14.4 4.2 -11.5 Z" fill="#FFF9DC"/><path d="M0 -2.5 L-1.6 -9 L0 -10.5 L1.6 -9 Z" fill="#FFC81E"/><path d="M0 -2 L-0.8 -7 L0.8 -7 Z" fill="#F59A10"/></g><g transform="translate(352.0,485.9) rotate(225)"><path d="M0 -3 L-4.2 -11.5 Q-4.2 -14.4 0 -14.4 Q4.2 -14.4 4.2 -11.5 Z" fill="#FFF9DC"/><path d="M0 -2.5 L-1.6 -9 L0 -10.5 L1.6 -9 Z" fill="#FFC81E"/><path d="M0 -2 L-0.8 -7 L0.8 -7 Z" fill="#F59A10"/></g><g transform="translate(352.0,485.9) rotate(270)"><path d="M0 -3 L-4.2 -11.5 Q-4.2 -14.4 0 -14.4 Q4.2 -14.4 4.2 -11.5 Z" fill="#FFF9DC"/><path d="M0 -2.5 L-1.6 -9 L0 -10.5 L1.6 -9 Z" fill="#FFC81E"/><path d="M0 -2 L-0.8 -7 L0.8 -7 Z" fill="#F59A10"/></g><g transform="translate(352.0,485.9) rotate(315)"><path d="M0 -3 L-4.2 -11.5 Q-4.2 -14.4 0 -14.4 Q4.2 -14.4 4.2 -11.5 Z" fill="#FFF9DC"/><path d="M0 -2.5 L-1.6 -9 L0 -10.5 L1.6 -9 Z" fill="#FFC81E"/><path d="M0 -2 L-0.8 -7 L0.8 -7 Z" fill="#F59A10"/></g><g transform="translate(448.0,486.0) rotate(0.0)"><line x1="0" y1="-4.0" x2="0" y2="-12.3" stroke="#F6A21A" stroke-width="1.95" stroke-dasharray="2.2 1.3"/><line x1="0" y1="-10.8" x2="0" y2="-16.1" stroke="#FFE08A" stroke-width="2.6" stroke-linecap="round"/><line x1="0" y1="-13.8" x2="0" y2="-17.400000000000002" stroke="#FFFFFF" stroke-width="2.9" stroke-linecap="round"/></g><g transform="translate(448.0,486.0) rotate(22.5)"><line x1="0" y1="-11.5" x2="0" y2="-16.4" stroke="#F6A21A" stroke-width="1.42" stroke-dasharray="2.2 1.3"/><line x1="0" y1="-14.9" x2="0" y2="-16.8" stroke="#FFE08A" stroke-width="1.9" stroke-linecap="round"/><line x1="0" y1="-17.9" x2="0" y2="-18.1" stroke="#FFFFFF" stroke-width="2.1999999999999997" stroke-linecap="round"/></g><g transform="translate(448.0,486.0) rotate(45.0)"><line x1="0" y1="-7.0" x2="0" y2="-15.9" stroke="#F6A21A" stroke-width="1.80" stroke-dasharray="2.2 1.3"/><line x1="0" y1="-14.4" x2="0" y2="-20.3" stroke="#FFE08A" stroke-width="2.4" stroke-linecap="round"/><line x1="0" y1="-17.4" x2="0" y2="-21.6" stroke="#FFFFFF" stroke-width="2.6999999999999997" stroke-linecap="round"/></g><g transform="translate(448.0,486.0) rotate(67.5)"><line x1="0" y1="-11.5" x2="0" y2="-16.4" stroke="#F6A21A" stroke-width="1.42" stroke-dasharray="2.2 1.3"/><line x1="0" y1="-14.9" x2="0" y2="-16.8" stroke="#FFE08A" stroke-width="1.9" stroke-linecap="round"/><line x1="0" y1="-17.9" x2="0" y2="-18.1" stroke="#FFFFFF" stroke-width="2.1999999999999997" stroke-linecap="round"/></g><g transform="translate(448.0,486.0) rotate(90.0)"><line x1="0" y1="-4.0" x2="0" y2="-12.3" stroke="#F6A21A" stroke-width="1.95" stroke-dasharray="2.2 1.3"/><line x1="0" y1="-10.8" x2="0" y2="-16.1" stroke="#FFE08A" stroke-width="2.6" stroke-linecap="round"/><line x1="0" y1="-13.8" x2="0" y2="-17.400000000000002" stroke="#FFFFFF" stroke-width="2.9" stroke-linecap="round"/></g><g transform="translate(448.0,486.0) rotate(112.5)"><line x1="0" y1="-11.5" x2="0" y2="-16.4" stroke="#F6A21A" stroke-width="1.42" stroke-dasharray="2.2 1.3"/><line x1="0" y1="-14.9" x2="0" y2="-16.8" stroke="#FFE08A" stroke-width="1.9" stroke-linecap="round"/><line x1="0" y1="-17.9" x2="0" y2="-18.1" stroke="#FFFFFF" stroke-width="2.1999999999999997" stroke-linecap="round"/></g><g transform="translate(448.0,486.0) rotate(135.0)"><line x1="0" y1="-7.0" x2="0" y2="-15.9" stroke="#F6A21A" stroke-width="1.80" stroke-dasharray="2.2 1.3"/><line x1="0" y1="-14.4" x2="0" y2="-20.3" stroke="#FFE08A" stroke-width="2.4" stroke-linecap="round"/><line x1="0" y1="-17.4" x2="0" y2="-21.6" stroke="#FFFFFF" stroke-width="2.6999999999999997" stroke-linecap="round"/></g><g transform="translate(448.0,486.0) rotate(157.5)"><line x1="0" y1="-11.5" x2="0" y2="-16.4" stroke="#F6A21A" stroke-width="1.42" stroke-dasharray="2.2 1.3"/><line x1="0" y1="-14.9" x2="0" y2="-16.8" stroke="#FFE08A" stroke-width="1.9" stroke-linecap="round"/><line x1="0" y1="-17.9" x2="0" y2="-18.1" stroke="#FFFFFF" stroke-width="2.1999999999999997" stroke-linecap="round"/></g><g transform="translate(448.0,486.0) rotate(180.0)"><line x1="0" y1="-4.0" x2="0" y2="-12.3" stroke="#F6A21A" stroke-width="1.95" stroke-dasharray="2.2 1.3"/><line x1="0" y1="-10.8" x2="0" y2="-16.1" stroke="#FFE08A" stroke-width="2.6" stroke-linecap="round"/><line x1="0" y1="-13.8" x2="0" y2="-17.400000000000002" stroke="#FFFFFF" stroke-width="2.9" stroke-linecap="round"/></g><g transform="translate(448.0,486.0) rotate(202.5)"><line x1="0" y1="-11.5" x2="0" y2="-16.4" stroke="#F6A21A" stroke-width="1.42" stroke-dasharray="2.2 1.3"/><line x1="0" y1="-14.9" x2="0" y2="-16.8" stroke="#FFE08A" stroke-width="1.9" stroke-linecap="round"/><line x1="0" y1="-17.9" x2="0" y2="-18.1" stroke="#FFFFFF" stroke-width="2.1999999999999997" stroke-linecap="round"/></g><g transform="translate(448.0,486.0) rotate(225.0)"><line x1="0" y1="-7.0" x2="0" y2="-15.9" stroke="#F6A21A" stroke-width="1.80" stroke-dasharray="2.2 1.3"/><line x1="0" y1="-14.4" x2="0" y2="-20.3" stroke="#FFE08A" stroke-width="2.4" stroke-linecap="round"/><line x1="0" y1="-17.4" x2="0" y2="-21.6" stroke="#FFFFFF" stroke-width="2.6999999999999997" stroke-linecap="round"/></g><g transform="translate(448.0,486.0) rotate(247.5)"><line x1="0" y1="-11.5" x2="0" y2="-16.4" stroke="#F6A21A" stroke-width="1.42" stroke-dasharray="2.2 1.3"/><line x1="0" y1="-14.9" x2="0" y2="-16.8" stroke="#FFE08A" stroke-width="1.9" stroke-linecap="round"/><line x1="0" y1="-17.9" x2="0" y2="-18.1" stroke="#FFFFFF" stroke-width="2.1999999999999997" stroke-linecap="round"/></g><g transform="translate(448.0,486.0) rotate(270.0)"><line x1="0" y1="-4.0" x2="0" y2="-12.3" stroke="#F6A21A" stroke-width="1.95" stroke-dasharray="2.2 1.3"/><line x1="0" y1="-10.8" x2="0" y2="-16.1" stroke="#FFE08A" stroke-width="2.6" stroke-linecap="round"/><line x1="0" y1="-13.8" x2="0" y2="-17.400000000000002" stroke="#FFFFFF" stroke-width="2.9" stroke-linecap="round"/></g><g transform="translate(448.0,486.0) rotate(292.5)"><line x1="0" y1="-11.5" x2="0" y2="-16.4" stroke="#F6A21A" stroke-width="1.42" stroke-dasharray="2.2 1.3"/><line x1="0" y1="-14.9" x2="0" y2="-16.8" stroke="#FFE08A" stroke-width="1.9" stroke-linecap="round"/><line x1="0" y1="-17.9" x2="0" y2="-18.1" stroke="#FFFFFF" stroke-width="2.1999999999999997" stroke-linecap="round"/></g><g transform="translate(448.0,486.0) rotate(315.0)"><line x1="0" y1="-7.0" x2="0" y2="-15.9" stroke="#F6A21A" stroke-width="1.80" stroke-dasharray="2.2 1.3"/><line x1="0" y1="-14.4" x2="0" y2="-20.3" stroke="#FFE08A" stroke-width="2.4" stroke-linecap="round"/><line x1="0" y1="-17.4" x2="0" y2="-21.6" stroke="#FFFFFF" stroke-width="2.6999999999999997" stroke-linecap="round"/></g><g transform="translate(448.0,486.0) rotate(337.5)"><line x1="0" y1="-11.5" x2="0" y2="-16.4" stroke="#F6A21A" stroke-width="1.42" stroke-dasharray="2.2 1.3"/><line x1="0" y1="-14.9" x2="0" y2="-16.8" stroke="#FFE08A" stroke-width="1.9" stroke-linecap="round"/><line x1="0" y1="-17.9" x2="0" y2="-18.1" stroke="#FFFFFF" stroke-width="2.1999999999999997" stroke-linecap="round"/></g><rect x="443.90" y="475.90" width="1.2" height="1.2" fill="#FFD040"/><rect x="450.90" y="475.90" width="1.2" height="1.2" fill="#FFD040"/><rect x="443.90" y="494.90" width="1.2" height="1.2" fill="#FFD040"/><rect x="450.90" y="494.90" width="1.2" height="1.2" fill="#FFD040"/><rect x="441.40" y="480.90" width="1.2" height="1.2" fill="#FFD040"/><rect x="453.40" y="480.90" width="1.2" height="1.2" fill="#FFD040"/><rect x="441.40" y="489.90" width="1.2" height="1.2" fill="#FFD040"/><rect x="453.40" y="489.90" width="1.2" height="1.2" fill="#FFD040"/><rect x="444.90" y="481.90" width="1.2" height="1.2" fill="#FFD040"/><rect x="449.90" y="488.90" width="1.2" height="1.2" fill="#FFD040"/><rect x="443.40" y="484.90" width="1.2" height="1.2" fill="#FFD040"/><rect x="451.40" y="485.90" width="1.2" height="1.2" fill="#FFD040"/><rect x="447.40" y="489.40" width="1.2" height="1.2" fill="#FFD040"/><rect x="447.40" y="481.40" width="1.2" height="1.2" fill="#FFD040"/><g transform="translate(543.75,485.75) rotate(5)"><path d="M0 -12.5 L-1.30 -23.0 Q0 -27.2 1.30 -23.0 Z" fill="#FFEFA8"/><path d="M0 -12.5 L-0.65 -20.60 L0.65 -20.60 Z" fill="#F4A81E"/><line x1="0" y1="-12.5" x2="0" y2="-22.0" stroke="#F7B428" stroke-width="0.9"/></g><g transform="translate(543.75,485.75) rotate(-5)"><path d="M0 -12.5 L-1.30 -23.0 Q0 -27.2 1.30 -23.0 Z" fill="#FFEFA8"/><path d="M0 -12.5 L-0.65 -20.60 L0.65 -20.60 Z" fill="#F4A81E"/><line x1="0" y1="-12.5" x2="0" y2="-22.0" stroke="#F7B428" stroke-width="0.9"/></g><g transform="translate(543.75,485.75) rotate(185)"><path d="M0 -12.5 L-1.30 -23.0 Q0 -27.2 1.30 -23.0 Z" fill="#FFEFA8"/><path d="M0 -12.5 L-0.65 -20.60 L0.65 -20.60 Z" fill="#F4A81E"/><line x1="0" y1="-12.5" x2="0" y2="-22.0" stroke="#F7B428" stroke-width="0.9"/></g><g transform="translate(543.75,485.75) rotate(175)"><path d="M0 -12.5 L-1.30 -23.0 Q0 -27.2 1.30 -23.0 Z" fill="#FFEFA8"/><path d="M0 -12.5 L-0.65 -20.60 L0.65 -20.60 Z" fill="#F4A81E"/><line x1="0" y1="-12.5" x2="0" y2="-22.0" stroke="#F7B428" stroke-width="0.9"/></g><g transform="translate(543.75,485.75) rotate(23)"><path d="M0 -13.5 L-1.20 -20.5 Q0 -24.7 1.20 -20.5 Z" fill="#FFEFA8"/><path d="M0 -13.5 L-0.60 -19.50 L0.60 -19.50 Z" fill="#F4A81E"/><line x1="0" y1="-13.5" x2="0" y2="-19.5" stroke="#F7B428" stroke-width="0.9"/></g><g transform="translate(543.75,485.75) rotate(-23)"><path d="M0 -13.5 L-1.20 -20.5 Q0 -24.7 1.20 -20.5 Z" fill="#FFEFA8"/><path d="M0 -13.5 L-0.60 -19.50 L0.60 -19.50 Z" fill="#F4A81E"/><line x1="0" y1="-13.5" x2="0" y2="-19.5" stroke="#F7B428" stroke-width="0.9"/></g><g transform="translate(543.75,485.75) rotate(203)"><path d="M0 -13.5 L-1.20 -20.5 Q0 -24.7 1.20 -20.5 Z" fill="#FFEFA8"/><path d="M0 -13.5 L-0.60 -19.50 L0.60 -19.50 Z" fill="#F4A81E"/><line x1="0" y1="-13.5" x2="0" y2="-19.5" stroke="#F7B428" stroke-width="0.9"/></g><g transform="translate(543.75,485.75) rotate(157)"><path d="M0 -13.5 L-1.20 -20.5 Q0 -24.7 1.20 -20.5 Z" fill="#FFEFA8"/><path d="M0 -13.5 L-0.60 -19.50 L0.60 -19.50 Z" fill="#F4A81E"/><line x1="0" y1="-13.5" x2="0" y2="-19.5" stroke="#F7B428" stroke-width="0.9"/></g><g transform="translate(543.75,485.75) rotate(45)"><path d="M0 -9.0 L-1.50 -26.5 Q0 -30.7 1.50 -26.5 Z" fill="#FFEFA8"/><path d="M0 -9.0 L-0.75 -21.30 L0.75 -21.30 Z" fill="#F4A81E"/><line x1="0" y1="-9.0" x2="0" y2="-25.5" stroke="#F7B428" stroke-width="0.9"/></g><g transform="translate(543.75,485.75) rotate(-45)"><path d="M0 -9.0 L-1.50 -26.5 Q0 -30.7 1.50 -26.5 Z" fill="#FFEFA8"/><path d="M0 -9.0 L-0.75 -21.30 L0.75 -21.30 Z" fill="#F4A81E"/><line x1="0" y1="-9.0" x2="0" y2="-25.5" stroke="#F7B428" stroke-width="0.9"/></g><g transform="translate(543.75,485.75) rotate(225)"><path d="M0 -9.0 L-1.50 -26.5 Q0 -30.7 1.50 -26.5 Z" fill="#FFEFA8"/><path d="M0 -9.0 L-0.75 -21.30 L0.75 -21.30 Z" fill="#F4A81E"/><line x1="0" y1="-9.0" x2="0" y2="-25.5" stroke="#F7B428" stroke-width="0.9"/></g><g transform="translate(543.75,485.75) rotate(135)"><path d="M0 -9.0 L-1.50 -26.5 Q0 -30.7 1.50 -26.5 Z" fill="#FFEFA8"/><path d="M0 -9.0 L-0.75 -21.30 L0.75 -21.30 Z" fill="#F4A81E"/><line x1="0" y1="-9.0" x2="0" y2="-25.5" stroke="#F7B428" stroke-width="0.9"/></g><g transform="translate(543.75,485.75) rotate(58)"><path d="M0 -14.5 L-1.20 -24.0 Q0 -28.2 1.20 -24.0 Z" fill="#FFEFA8"/><path d="M0 -14.5 L-0.60 -22.00 L0.60 -22.00 Z" fill="#F4A81E"/><line x1="0" y1="-14.5" x2="0" y2="-23.0" stroke="#F7B428" stroke-width="0.9"/></g><g transform="translate(543.75,485.75) rotate(-58)"><path d="M0 -14.5 L-1.20 -24.0 Q0 -28.2 1.20 -24.0 Z" fill="#FFEFA8"/><path d="M0 -14.5 L-0.60 -22.00 L0.60 -22.00 Z" fill="#F4A81E"/><line x1="0" y1="-14.5" x2="0" y2="-23.0" stroke="#F7B428" stroke-width="0.9"/></g><g transform="translate(543.75,485.75) rotate(238)"><path d="M0 -14.5 L-1.20 -24.0 Q0 -28.2 1.20 -24.0 Z" fill="#FFEFA8"/><path d="M0 -14.5 L-0.60 -22.00 L0.60 -22.00 Z" fill="#F4A81E"/><line x1="0" y1="-14.5" x2="0" y2="-23.0" stroke="#F7B428" stroke-width="0.9"/></g><g transform="translate(543.75,485.75) rotate(122)"><path d="M0 -14.5 L-1.20 -24.0 Q0 -28.2 1.20 -24.0 Z" fill="#FFEFA8"/><path d="M0 -14.5 L-0.60 -22.00 L0.60 -22.00 Z" fill="#F4A81E"/><line x1="0" y1="-14.5" x2="0" y2="-23.0" stroke="#F7B428" stroke-width="0.9"/></g><g transform="translate(543.75,485.75) rotate(74)"><path d="M0 -14.0 L-1.10 -17.5 Q0 -21.7 1.10 -17.5 Z" fill="#FFEFA8"/><path d="M0 -14.0 L-0.55 -17.90 L0.55 -17.90 Z" fill="#F4A81E"/><line x1="0" y1="-14.0" x2="0" y2="-16.5" stroke="#F7B428" stroke-width="0.9"/></g><g transform="translate(543.75,485.75) rotate(-74)"><path d="M0 -14.0 L-1.10 -17.5 Q0 -21.7 1.10 -17.5 Z" fill="#FFEFA8"/><path d="M0 -14.0 L-0.55 -17.90 L0.55 -17.90 Z" fill="#F4A81E"/><line x1="0" y1="-14.0" x2="0" y2="-16.5" stroke="#F7B428" stroke-width="0.9"/></g><g transform="translate(543.75,485.75) rotate(254)"><path d="M0 -14.0 L-1.10 -17.5 Q0 -21.7 1.10 -17.5 Z" fill="#FFEFA8"/><path d="M0 -14.0 L-0.55 -17.90 L0.55 -17.90 Z" fill="#F4A81E"/><line x1="0" y1="-14.0" x2="0" y2="-16.5" stroke="#F7B428" stroke-width="0.9"/></g><g transform="translate(543.75,485.75) rotate(106)"><path d="M0 -14.0 L-1.10 -17.5 Q0 -21.7 1.10 -17.5 Z" fill="#FFEFA8"/><path d="M0 -14.0 L-0.55 -17.90 L0.55 -17.90 Z" fill="#F4A81E"/><line x1="0" y1="-14.0" x2="0" y2="-16.5" stroke="#F7B428" stroke-width="0.9"/></g><path d="M538.75 485.75 L524.25 484.15 L518.95 485.75 L524.25 487.35 Z" fill="#FFD84A"/><line x1="538.75" y1="485.75" x2="525.75" y2="485.75" stroke="#F3A21C" stroke-width="1.3" stroke-dasharray="2.4 1"/><path d="M548.75 485.75 L563.25 484.15 L568.55 485.75 L563.25 487.35 Z" fill="#FFD84A"/><line x1="548.75" y1="485.75" x2="561.75" y2="485.75" stroke="#F3A21C" stroke-width="1.3" stroke-dasharray="2.4 1"/><rect x="545.31" y="489.73" width="1.1" height="1.1" fill="#F0A024"/><rect x="540.97" y="489.68" width="1.1" height="1.1" fill="#F0A024"/><rect x="538.31" y="486.25" width="1.1" height="1.1" fill="#F0A024"/><rect x="539.33" y="482.03" width="1.1" height="1.1" fill="#F0A024"/><rect x="543.26" y="480.20" width="1.1" height="1.1" fill="#F0A024"/><rect x="547.15" y="482.13" width="1.1" height="1.1" fill="#F0A024"/><rect x="548.06" y="486.37" width="1.1" height="1.1" fill="#F0A024"/><rect x="541.26" y="492.96" width="1.1" height="1.1" fill="#F6B030"/><rect x="537.38" y="490.68" width="1.1" height="1.1" fill="#F6B030"/><rect x="535.34" y="486.66" width="1.1" height="1.1" fill="#F6B030"/><rect x="535.79" y="482.18" width="1.1" height="1.1" fill="#F6B030"/><rect x="538.60" y="478.65" width="1.1" height="1.1" fill="#F6B030"/><rect x="542.87" y="477.21" width="1.1" height="1.1" fill="#F6B030"/><rect x="547.24" y="478.30" width="1.1" height="1.1" fill="#F6B030"/><rect x="550.33" y="481.58" width="1.1" height="1.1" fill="#F6B030"/><rect x="551.16" y="486.01" width="1.1" height="1.1" fill="#F6B030"/><rect x="549.46" y="490.19" width="1.1" height="1.1" fill="#F6B030"/><rect x="545.77" y="492.78" width="1.1" height="1.1" fill="#F6B030"/><rect x="534.42" y="491.82" width="1.1" height="1.1" fill="#FFDF70"/><rect x="532.41" y="487.35" width="1.1" height="1.1" fill="#FFDF70"/><rect x="532.55" y="482.46" width="1.1" height="1.1" fill="#FFDF70"/><rect x="534.79" y="478.11" width="1.1" height="1.1" fill="#FFDF70"/><rect x="538.70" y="475.16" width="1.1" height="1.1" fill="#FFDF70"/><rect x="543.50" y="474.20" width="1.1" height="1.1" fill="#FFDF70"/><rect x="548.24" y="475.42" width="1.1" height="1.1" fill="#FFDF70"/><rect x="551.98" y="478.58" width="1.1" height="1.1" fill="#FFDF70"/><rect x="553.99" y="483.05" width="1.1" height="1.1" fill="#FFDF70"/><rect x="553.85" y="487.94" width="1.1" height="1.1" fill="#FFDF70"/><rect x="551.61" y="492.29" width="1.1" height="1.1" fill="#FFDF70"/><rect x="547.70" y="495.24" width="1.1" height="1.1" fill="#FFDF70"/><rect x="542.90" y="496.20" width="1.1" height="1.1" fill="#FFDF70"/><rect x="538.16" y="494.98" width="1.1" height="1.1" fill="#FFDF70"/><rect x="529.74" y="486.26" width="1.1" height="1.1" fill="#F6B030"/><rect x="531.69" y="478.15" width="1.1" height="1.1" fill="#F6B030"/><rect x="538.03" y="472.73" width="1.1" height="1.1" fill="#F6B030"/><rect x="546.35" y="472.07" width="1.1" height="1.1" fill="#F6B030"/><rect x="553.47" y="476.43" width="1.1" height="1.1" fill="#F6B030"/><rect x="556.66" y="484.14" width="1.1" height="1.1" fill="#F6B030"/><rect x="554.71" y="492.25" width="1.1" height="1.1" fill="#F6B030"/><rect x="548.37" y="497.67" width="1.1" height="1.1" fill="#F6B030"/><rect x="540.05" y="498.33" width="1.1" height="1.1" fill="#F6B030"/><rect x="532.93" y="493.97" width="1.1" height="1.1" fill="#F6B030"/><g transform="translate(591,437)"><g id="fire"><path d="M18.6 49 C18.6 42.5 24 38.2 31 38.4 L42 39.6 L53 41.4 L51 42.2 L61 43 L58.5 44 L69 45.6 L66 46.4 L79.2 48.6 L67 50.4 L71 51.8 L61 53 L64 54.4 L53 55.6 L55 56.8 L42 57.8 L31 59.4 C24 59.6 18.6 55.5 18.6 49 Z" fill="#DC4A1C"/><path d="M30 40 L44 41.4 L56 43.6 L64 45.8 L73 48.6 L64 51 L57 53.2 L44 56.4 L30 58 Z" fill="#F58A14"/><path d="M30 40.6 L42 41.6 L50 43.4 L55 45.6 L61 48.6 L55 51.2 L50 53.2 L42 55.8 L30 57.4 Z" fill="#FFC814"/><ellipse cx="32.6" cy="49" rx="12.6" ry="9.3" fill="#FFE9A0"/><ellipse cx="31" cy="49" rx="11.2" ry="9.3" fill="#FFF6CF"/><ellipse cx="27.6" cy="49" rx="8" ry="8.3" fill="#FFFFFF"/><rect x="60" y="41.6" width="2.4" height="1" fill="#DC4A1C"/><rect x="64" y="41.8" width="1.2" height="1" fill="#DC4A1C"/><rect x="70" y="44" width="2.6" height="1" fill="#DC4A1C"/><rect x="74.4" y="44" width="1.2" height="1" fill="#DC4A1C"/><rect x="66" y="53.6" width="2.2" height="1" fill="#DC4A1C"/><rect x="69.6" y="53.8" width="1" height="1" fill="#DC4A1C"/><rect x="57" y="55.8" width="2" height="1" fill="#DC4A1C"/><rect x="61" y="56" width="1" height="1" fill="#DC4A1C"/></g></g><polygon points="735.50,470.20 737.87,479.67 747.66,473.24 741.23,483.03 750.70,485.40 741.23,487.77 747.66,497.56 737.87,491.13 735.50,500.60 733.13,491.13 723.34,497.56 729.77,487.77 720.30,485.40 729.77,483.03 723.34,473.24 733.13,479.67" fill="#D84A22"/><polygon points="735.50,475.90 738.41,478.38 742.57,478.33 742.52,482.49 745.00,485.40 742.52,488.31 742.57,492.47 738.41,492.42 735.50,494.90 732.59,492.42 728.43,492.47 728.48,488.31 726.00,485.40 728.48,482.49 728.43,478.33 732.59,478.38" fill="#D84A22"/><polygon points="735.50,477.80 737.41,480.78 741.02,479.88 740.12,483.49 743.10,485.40 740.12,487.31 741.02,490.92 737.41,490.02 735.50,493.00 733.59,490.02 729.98,490.92 730.88,487.31 727.90,485.40 730.88,483.49 729.98,479.88 733.59,480.78" fill="#F07E14"/><polygon points="735.50,479.20 736.72,482.44 739.60,481.30 738.46,484.18 741.70,485.40 738.46,486.62 739.60,489.50 736.72,488.36 735.50,491.60 734.28,488.36 731.40,489.50 732.54,486.62 729.30,485.40 732.54,484.18 731.40,481.30 734.28,482.44" fill="#FFB010"/><circle cx="735.5" cy="485.4" r="2.8" fill="#FFD400"/><polygon points="831.40,467.00 833.45,475.10 837.33,471.08 837.23,476.67 846.81,469.99 840.13,479.57 845.72,479.47 841.70,483.35 849.80,485.40 841.70,487.45 845.72,491.33 840.13,491.23 846.81,500.81 837.23,494.13 837.33,499.72 833.45,495.70 831.40,503.80 829.35,495.70 825.47,499.72 825.57,494.13 815.99,500.81 822.67,491.23 817.08,491.33 821.10,487.45 813.00,485.40 821.10,483.35 817.08,479.47 822.67,479.57 815.99,469.99 825.57,476.67 825.47,471.08 829.35,475.10" fill="#D84A22"/><polygon points="831.40,471.80 833.62,474.22 836.60,472.84 837.73,475.92 841.02,475.78 840.88,479.07 843.96,480.20 842.58,483.18 845.00,485.40 842.58,487.62 843.96,490.60 840.88,491.73 841.02,495.02 837.73,494.88 836.60,497.96 833.62,496.58 831.40,499.00 829.18,496.58 826.20,497.96 825.07,494.88 821.78,495.02 821.92,491.73 818.84,490.60 820.22,487.62 817.80,485.40 820.22,483.18 818.84,480.20 821.92,479.07 821.78,475.78 825.07,475.92 826.20,472.84 829.18,474.22" fill="#D84A22"/><polygon points="831.40,473.20 833.08,476.97 836.07,474.13 836.18,478.25 840.03,476.77 838.55,480.62 842.67,480.73 839.83,483.72 843.60,485.40 839.83,487.08 842.67,490.07 838.55,490.18 840.03,494.03 836.18,492.55 836.07,496.67 833.08,493.83 831.40,497.60 829.72,493.83 826.73,496.67 826.62,492.55 822.77,494.03 824.25,490.18 820.13,490.07 822.97,487.08 819.20,485.40 822.97,483.72 820.13,480.73 824.25,480.62 822.77,476.77 826.62,478.25 826.73,474.13 829.72,476.97" fill="#F07E14"/><polygon points="831.40,475.20 832.73,478.73 835.30,475.98 835.18,479.75 838.61,478.19 837.05,481.62 840.82,481.50 838.07,484.07 841.60,485.40 838.07,486.73 840.82,489.30 837.05,489.18 838.61,492.61 835.18,491.05 835.30,494.82 832.73,492.07 831.40,495.60 830.07,492.07 827.50,494.82 827.62,491.05 824.19,492.61 825.75,489.18 821.98,489.30 824.73,486.73 821.20,485.40 824.73,484.07 821.98,481.50 825.75,481.62 824.19,478.19 827.62,479.75 827.50,475.98 830.07,478.73" fill="#FFC60C"/><polygon points="831.40,480.60 832.47,482.81 833.95,482.85 833.99,484.33 837.60,485.40 833.99,486.47 833.95,487.95 832.47,487.99 831.40,490.20 830.33,487.99 828.85,487.95 828.81,486.47 825.20,485.40 828.81,484.33 828.85,482.85 830.33,482.81" fill="#87AFB2"/><polygon points="927.40,456.00 931.01,467.06 936.58,463.03 937.68,469.82 946.85,465.75 942.78,474.92 949.57,476.02 945.54,481.59 956.60,485.20 945.54,488.81 949.57,494.38 942.78,495.48 946.85,504.65 937.68,500.58 936.58,507.37 931.01,503.34 927.40,514.40 923.79,503.34 918.22,507.37 917.12,500.58 907.95,504.65 912.02,495.48 905.23,494.38 909.26,488.81 898.20,485.20 909.26,481.59 905.23,476.02 912.02,474.92 907.95,465.75 917.12,469.82 918.22,463.03 923.79,467.06" fill="#D84A22"/><polygon points="927.40,462.70 931.20,466.07 936.01,464.41 938.23,468.99 943.31,469.29 943.61,474.37 948.19,476.59 946.53,481.40 949.90,485.20 946.53,489.00 948.19,493.81 943.61,496.03 943.31,501.11 938.23,501.41 936.01,505.99 931.20,504.33 927.40,507.70 923.60,504.33 918.79,505.99 916.57,501.41 911.49,501.11 911.19,496.03 906.61,493.81 908.27,489.00 904.90,485.20 908.27,481.40 906.61,476.59 911.19,474.37 911.49,469.29 916.57,468.99 918.79,464.41 923.60,466.07" fill="#D84A22"/><polygon points="927.40,464.70 930.23,470.98 935.25,466.26 935.46,473.14 941.90,470.70 939.46,477.14 946.34,477.35 941.62,482.37 947.90,485.20 941.62,488.03 946.34,493.05 939.46,493.26 941.90,499.70 935.46,497.26 935.25,504.14 930.23,499.42 927.40,505.70 924.57,499.42 919.55,504.14 919.34,497.26 912.90,499.70 915.34,493.26 908.46,493.05 913.18,488.03 906.90,485.20 913.18,482.37 908.46,477.35 915.34,477.14 912.90,470.70 919.34,473.14 919.55,466.26 924.57,470.98" fill="#F07E14"/><polygon points="927.40,467.00 929.84,472.94 934.36,468.39 934.34,474.81 940.27,472.33 937.79,478.26 944.21,478.24 939.66,482.76 945.60,485.20 939.66,487.64 944.21,492.16 937.79,492.14 940.27,498.07 934.34,495.59 934.36,502.01 929.84,497.46 927.40,503.40 924.96,497.46 920.44,502.01 920.46,495.59 914.53,498.07 917.01,492.14 910.59,492.16 915.14,487.64 909.20,485.20 915.14,482.76 910.59,478.24 917.01,478.26 914.53,472.33 920.46,474.81 920.44,468.39 924.96,472.94" fill="#FFC60C"/><polygon points="927.40,476.20 929.94,472.45 930.84,476.89 934.62,474.39 933.76,478.84 938.21,477.98 935.71,481.76 940.15,482.66 936.40,485.20 940.15,487.74 935.71,488.64 938.21,492.42 933.76,491.56 934.62,496.01 930.84,493.51 929.94,497.95 927.40,494.20 924.86,497.95 923.96,493.51 920.18,496.01 921.04,491.56 916.59,492.42 919.09,488.64 914.65,487.74 918.40,485.20 914.65,482.66 919.09,481.76 916.59,477.98 921.04,478.84 920.18,474.39 923.96,476.89 924.86,472.45" fill="#87AFB2"/><circle cx="927.4" cy="485.2" r="9.4" fill="#87AFB2"/><rect x="984" y="489" width="2" height="1" fill="#D84A22"/></svg>
</div>
</body>
</html>
